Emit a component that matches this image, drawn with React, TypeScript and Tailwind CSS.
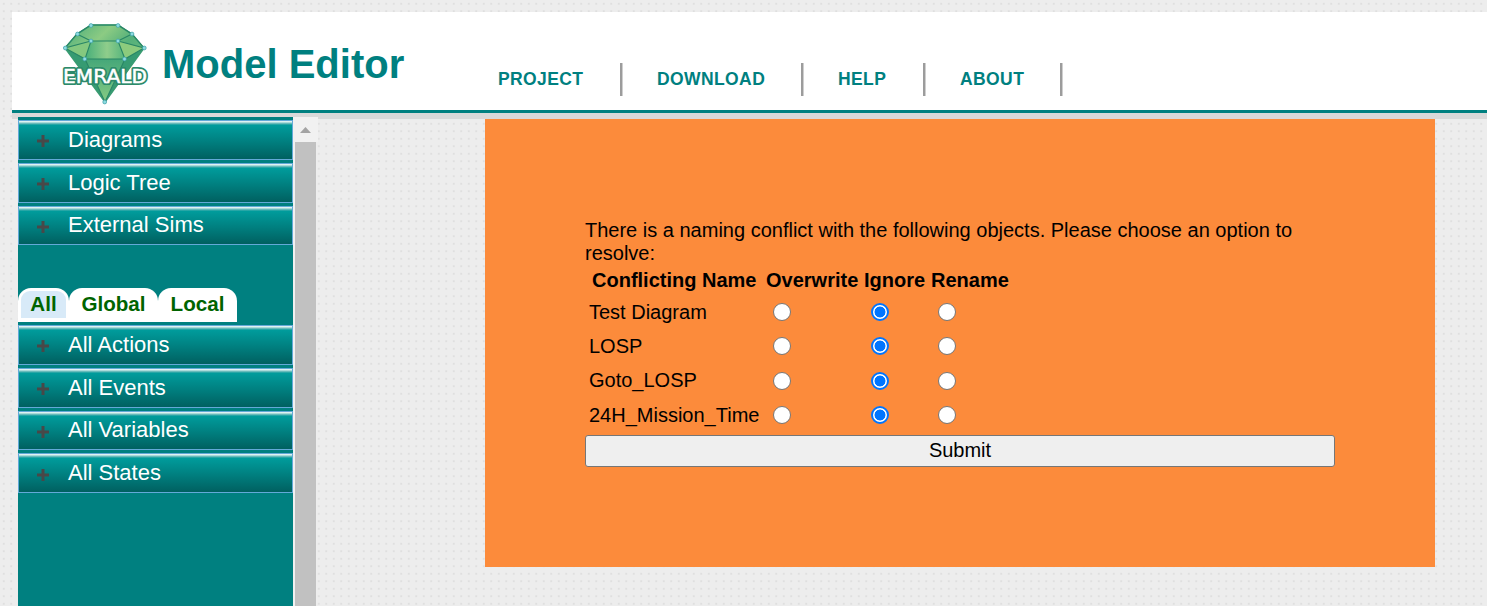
import React from "react";

const dots = "bg-[#ededed] bg-[radial-gradient(circle,#dfdfdf_0.8px,transparent_1.3px)] bg-[size:7.5px_7.5px]";

function Logo() {
  const nodes = [[41, 15.5], [68, 15.5], [27.5, 24], [82, 24], [15.3, 38], [94.3, 38], [41, 31], [68, 31], [34.7, 49], [74.5, 49], [54.7, 92]];
  return (
    <svg className="h-[110px] w-[110px] shrink-0" viewBox="0 0 110 110" role="img" aria-label="EMRALD">
      <defs>
        <linearGradient id="gem" x1="0" y1="0" x2="1" y2="1">
          <stop offset="0" stopColor="#45aa7a" />
          <stop offset=".3" stopColor="#8ccb83" />
          <stop offset=".5" stopColor="#55b07a" />
          <stop offset="1" stopColor="#7cc27c" />
        </linearGradient>
        <linearGradient id="face" x1="0" y1="0" x2="1" y2="0">
          <stop offset="0" stopColor="#46ae79" />
          <stop offset=".55" stopColor="#8fcd8b" />
          <stop offset="1" stopColor="#54b47c" />
        </linearGradient>
        <linearGradient id="tip" x1="0" y1="0" x2="0" y2="1">
          <stop offset="0" stopColor="#45a779" />
          <stop offset="1" stopColor="#86cb83" />
        </linearGradient>
      </defs>
      <path d="M41 15H68L82 24L94 38L55 92L15 38L27 24Z" fill="url(#gem)" stroke="#3e9c72" strokeWidth="1.5" />
      <path d="M15 38L41 31L35 49Z" fill="#84c87f" />
      <path d="M94 38L68 31L75 49Z" fill="#8ccb7d" />
      <path d="M41 31H68L75 49H35Z" fill="url(#face)" />
      <path d="M15 38L35 49L55 92Z" fill="#369b72" />
      <path d="M94 38L75 49L55 92Z" fill="#369b72" />
      <path d="M35 49H75L55 92Z" fill="url(#tip)" />
      <path d="M41 31H68L75 49H35ZM41 31L27 24M41 31L15 38L35 49L55 92M68 31L82 24M68 31L94 38L75 49L55 92M41 15L27 24L15 38M68 15L82 24L94 38M41 15H68" fill="none" stroke="#288666" strokeWidth="1.1" />
      {nodes.map(([x, y]) => <circle key={x + "-" + y} cx={x} cy={y} r="1.9" fill="#8ddce0" stroke="#3c9da8" strokeWidth=".7" />)}
      <text x="13" y="73" textLength="84" lengthAdjust="spacingAndGlyphs" className="font-['DejaVu_Sans'] text-[19.5px] font-normal" fill="none" stroke="#2c8a6a" strokeWidth="4" strokeLinejoin="round">EMRALD</text>
      <text x="13" y="73" textLength="84" lengthAdjust="spacingAndGlyphs" className="font-['DejaVu_Sans'] text-[19.5px] font-normal" fill="#fff" stroke="#fff" strokeWidth=".5">EMRALD</text>
    </svg>
  );
}

function Item({ label }: { label: string }) {
  return (
    <div className="mb-[3px] flex h-[39.8px] items-center border border-[#63a9d8] bg-[linear-gradient(#e6f6f6_0px,#d5eeee_1px,#7dc5c5_2px,#4fb0b0_3px,#009c9c_4px,#007f7f_55%,#006060_100%)] pb-px pl-[18px] text-[22px] text-white">
      <svg className="mt-[4px] h-3 w-3" viewBox="0 0 12 12"><path d="M6 0V12M0 6H12" stroke="#484848" strokeWidth="3" /></svg>
      <span className="ml-[19px]">{label}</span>
    </div>
  );
}

const menu = [["PROJECT", "w-[138px]"], ["DOWNLOAD", "w-[181px]"], ["HELP", "w-[122px]"], ["ABOUT", "w-[137px]"]];
const conflicts = ["Test Diagram", "LOSP", "Goto_LOSP", "24H_Mission_Time"];

function Option({ name, checked, label }: { name: string; checked?: boolean; label: string }) {
  return (
    <input
      type="radio"
      name={name}
      aria-label={label}
      defaultChecked={checked}
      className="mr-auto h-[18px] w-[18px] appearance-none rounded-full border border-[#767676] bg-white checked:border-2 checked:border-[#0075ff] checked:bg-[radial-gradient(circle,#0075ff_5.1px,#fff_5.8px)]"
    />
  );
}

export default function App() {
  return (
    <div className={"flex h-[606px] w-full flex-col overflow-hidden pl-3 pt-3 font-['Liberation_Sans',Arial,sans-serif] " + dots}>
      <header className="h-[107px] shrink-0 border-b-[6px] border-[#d9d9d9]">
        <div className="flex h-[101px] border-b-[3px] border-[#008080] bg-white">
          <div className="-mt-[2px] ml-[38px] h-[100px] shrink-0"><Logo /></div>
          <h1 className="ml-[2px] w-[323px] shrink-0 pt-[29px] text-[40px] leading-[46px] font-bold text-[#008080]">Model Editor</h1>
          <nav className="flex pt-[51px]">
            {menu.map(([label, width], i) => (
              <div key={label} className={"flex h-[33px] items-center border-r border-[#cfcfcf] text-[17.5px] leading-[24px] font-bold text-[#008080] " + width}>
                <a className={"w-full pb-px tracking-[0.4px] " + (i ? "pl-[34px]" : "pl-[13px]")}>{label}</a>
                <span className="h-full w-[2px] shrink-0 bg-[#9c9c9c]" />
              </div>
            ))}
          </nav>
        </div>
      </header>
      <div className="-mt-[2px] flex h-[489px] shrink-0 pl-[6px]">
        <aside className="w-[275px] shrink-0 bg-[#008080] pt-[3px]">
          {["Diagrams", "Logic Tree", "External Sims"].map((x) => <Item key={x} label={x} />)}
          <div className="mb-[3px] mt-[42.6px] flex h-[34px] text-[20.6px] leading-[26px] font-bold text-[#006400]">
            <div className="w-[51px] rounded-t-[13px] bg-white p-[3px]"><div className="h-[27px] w-[45px] rounded-t-[9px] bg-[#d8eaf8] text-center leading-[26px]">All</div></div>
            <div className="w-[89px] rounded-t-[13px] bg-white pt-[3px] text-center">Global</div>
            <div className="w-[79px] rounded-t-[13px] bg-white pt-[3px] text-center">Local</div>
          </div>
          {["All Actions", "All Events", "All Variables", "All States"].map((x) => <Item key={x} label={x} />)}
        </aside>
        <div className="flex w-[25px] shrink-0 flex-col">
          <div className="flex h-[25px] items-center justify-center bg-[#f1f1f1]"><svg className="mt-px h-[6px] w-[11px]" viewBox="0 0 11 6"><path d="M0 6L5.5 0L11 6Z" fill="#a3a3a3" /></svg></div>
          <div className="mr-[2px] flex-1 border-l-2 border-[#f1f1f1] bg-[#c1c1c1]" />
        </div>
        <main className="ml-[167px] mt-[2px] h-[448px] w-[950px] bg-[#fc8b3b] px-[100px] pt-[100px] text-[20px] leading-[23px] text-black">
          <p>There is a naming conflict with the following objects. Please choose an option to resolve:</p>
          <div className="grid h-[170px] grid-cols-[178px_98px_67px_90px] grid-rows-[30px_34px_34px_35px_34px] items-center">
            <b className="pl-[7px]">Conflicting Name</b><b className="pl-[3px]">Overwrite</b><b className="pl-[3px]">Ignore</b><b className="pl-[3px]">Rename</b>
            {conflicts.map((name) => (
              <React.Fragment key={name}>
                <span className="pl-[4px]">{name}</span>
                <span className="flex pl-[10px]"><Option name={name} label="Overwrite" /></span>
                <span className="flex pl-[10px]"><Option name={name} label="Ignore" checked /></span>
                <span className="flex pl-[10px]"><Option name={name} label="Rename" /></span>
              </React.Fragment>
            ))}
          </div>
          <button className="h-8 w-full rounded-[3px] border border-[#767676] bg-[#efefef] pb-px text-[20px] leading-[23px]">Submit</button>
        </main>
      </div>
    </div>
  );
}
